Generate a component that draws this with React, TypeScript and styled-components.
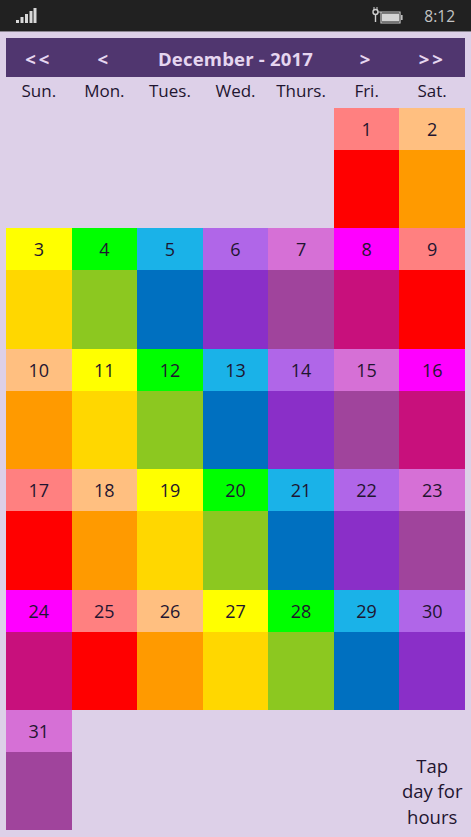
import React from "react";
import styled, { createGlobalStyle } from "styled-components";

interface IDayColors {
  head: string;
  body: string;
}

interface IDayCellProps {
  start?: number;
}

const palette: IDayColors[] = [
  { head: "#ff8080", body: "#ff0000" },
  { head: "#ffbf80", body: "#ff9a00" },
  { head: "#ffff00", body: "#ffd700" },
  { head: "#00ff00", body: "#8cc820" },
  { head: "#1ab2e8", body: "#0070c0" },
  { head: "#b066e8", body: "#8a2fc8" },
  { head: "#d670d6", body: "#a0449c" },
  { head: "#ff00ff", body: "#c8107c" },
];

const weekdays: string[] = ["Sun.", "Mon.", "Tues.", "Wed.", "Thurs.", "Fri.", "Sat."];
const days: number[] = Array.from({ length: 31 }, (_, i) => i + 1);

const GlobalStyle = createGlobalStyle`
  html, body {
    margin: 0;
    padding: 0;
    background: #ddd0e8;
  }
  * {
    box-sizing: border-box;
  }
`;

const Page = styled.div`
  width: 471px;
  height: 837px;
  overflow: hidden;
  background: #ddd0e8;
  font-family: "Open Sans", "Liberation Sans", sans-serif;
  color: #1f1530;
`;

const StatusBar = styled.div`
  height: 32px;
  padding: 0 16px;
  display: flex;
  align-items: center;
  background: #212121;
  border-bottom: 1px solid #8a8590;
  color: #c4c4c4;
`;

const StatusRight = styled.div`
  margin-left: auto;
  display: flex;
  align-items: center;
  gap: 21px;
`;

const Clock = styled.span`
  font-size: 15.5px;
  line-height: 20px;
`;

const Content = styled.div`
  padding: 6px 6px 0;
`;

const MonthBar = styled.div`
  height: 39px;
  display: grid;
  grid-template-columns: repeat(7, 1fr);
  align-items: center;
  padding-top: 2px;
  background: #50366f;
  color: #e6d6f0;
  font-size: 18.5px;
  font-weight: 700;
`;

const NavButton = styled.div`
  text-align: center;
  letter-spacing: 3px;
`;

const MonthTitle = styled.div`
  grid-column: span 3;
  text-align: center;
  letter-spacing: 0.2px;
  white-space: nowrap;
`;

const WeekRow = styled.div`
  height: 31px;
  display: grid;
  grid-template-columns: repeat(7, 1fr);
  align-items: start;
  padding-top: 2px;
`;

const WeekLabel = styled.div`
  text-align: center;
  font-size: 17px;
  line-height: 23px;
  white-space: nowrap;
`;

const CalendarGrid = styled.div`
  display: grid;
  grid-template-columns: repeat(7, 1fr);
  grid-auto-rows: 120.4px;
`;

const DayCell = styled.div<IDayCellProps>`
  display: flex;
  flex-direction: column;
  grid-column-start: ${(props: IDayCellProps) => props.start ?? "auto"};
`;

const DayHead = styled.div<{ $color: string }>`
  height: 42px;
  display: flex;
  align-items: center;
  justify-content: center;
  background: ${(props) => props.$color};
  font-size: 18px;
`;

const DayBody = styled.div<{ $color: string }>`
  flex: 1;
  background: ${(props) => props.$color};
`;

const Hint = styled.div`
  grid-column-start: 7;
  align-self: end;
  padding-bottom: 1px;
  margin: 0 -4px;
  text-align: center;
  font-size: 18.5px;
  line-height: 25.5px;
  white-space: nowrap;
`;

const SignalIcon: React.FC = (): JSX.Element => (
  <svg width="21" height="16" viewBox="0 0 21 16" fill="#d8d8d8">
    <rect x="0" y="12" width="3" height="3" />
    <rect x="4.5" y="9" width="3" height="6" />
    <rect x="9" y="6" width="3" height="9" />
    <rect x="13.5" y="3" width="3" height="12" />
    <rect x="17.5" y="0" width="3" height="15" />
  </svg>
);

const BatteryIcon: React.FC = (): JSX.Element => (
  <svg width="32" height="18" viewBox="0 0 32 18" fill="none">
    <path d="M3 0v3M6 0v3" stroke="#d0d0d0" strokeWidth="1" />
    <circle cx="4.5" cy="5" r="2.5" stroke="#d0d0d0" strokeWidth="1.4" />
    <path d="M4.5 7.5V15" stroke="#d0d0d0" strokeWidth="1.4" />
    <path d="M7 5H10V16H29V5H10" stroke="#c8c8c8" strokeWidth="1.2" />
    <rect x="11" y="6.5" width="17" height="8" fill="#d4d4d4" />
    <rect x="30" y="8" width="1.6" height="5" fill="#c0c0c0" />
  </svg>
);

const App: React.FC = (): JSX.Element => {
  const body: JSX.Element =
    <Page>
      <GlobalStyle />
      <StatusBar>
        <SignalIcon />
        <StatusRight>
          <BatteryIcon />
          <Clock>8:12</Clock>
        </StatusRight>
      </StatusBar>
      <Content>
        <MonthBar>
          <NavButton>&lt;&lt;</NavButton>
          <NavButton>&lt;</NavButton>
          <MonthTitle>December - 2017</MonthTitle>
          <NavButton>&gt;</NavButton>
          <NavButton>&gt;&gt;</NavButton>
        </MonthBar>
        <WeekRow>
          {weekdays.map((name: string) => <WeekLabel key={name}>{name}</WeekLabel>)}
        </WeekRow>
        <CalendarGrid>
          {days.map((day: number) => {
            const colors: IDayColors = palette[(day - 1) % palette.length];
            return (
              <DayCell key={day} start={day === 1 ? 6 : undefined}>
                <DayHead $color={colors.head}>{day}</DayHead>
                <DayBody $color={colors.body} />
              </DayCell>
            );
          })}
          <Hint>Tap<br />day for<br />hours</Hint>
        </CalendarGrid>
      </Content>
    </Page>;

  return (
    body
  );
};

export default App;
